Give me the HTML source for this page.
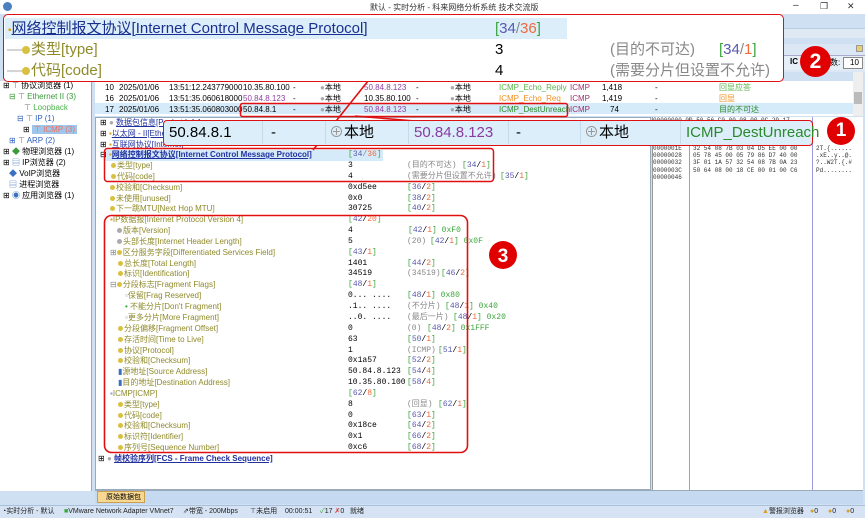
<!DOCTYPE html>
<html><head><meta charset="utf-8">
<style>
*{margin:0;padding:0;box-sizing:border-box}
body{width:865px;height:518px;position:relative;overflow:hidden;background:#cfe0f3;font-family:"Liberation Sans","Noto Sans CJK SC",sans-serif;font-size:8px;color:#000}
.a{position:absolute;white-space:nowrap}
.m{font-family:"Liberation Mono","Noto Sans CJK SC",monospace}
.ol{color:#8f8a2a}
.g{color:#3aa63a}.bl{color:#5a5ab0}.o{color:#f06a3a}.gy{color:#888}
.row{position:absolute;left:0;height:11px;line-height:11px;white-space:nowrap}
.ic{display:inline-block;width:5px;height:5px;border-radius:50%;background:#d8c040;vertical-align:middle;margin-right:1px}
.pl div{position:absolute;white-space:nowrap}
</style></head><body>
<div class="a" style="left:0;top:0;width:865px;height:14px;background:#fff"></div>
<div class="a" style="left:3px;top:2px;width:9px;height:9px;border-radius:50%;background:#4a7fc0"></div>
<div class="a" style="left:370px;top:2px;font-size:8px;color:#333">默认 - 实时分析 - 科来网络分析系统 技术交流版</div>
<div class="a" style="left:793px;top:0px;font-size:10px;color:#333">–</div>
<div class="a" style="left:820px;top:1px;font-size:9px;color:#333">❐</div>
<div class="a" style="left:847px;top:1px;font-size:9px;color:#333">✕</div>
<div class="a" style="left:784px;top:28px;width:81px;height:10px;background:#dfe9f4;border-top:1px solid #b8cde6"></div>
<div class="a" style="left:784px;top:44px;width:81px;height:28px;background:#dbe7f5"></div>
<div class="a" style="left:856px;top:45px;width:7px;height:7px;background:#e8d070;border:1px solid #999"></div>
<div class="a" style="left:784px;top:55px;width:81px;height:15px;background:#e6eef8;border-top:1px solid #aac"></div>
<div class="a" style="left:790px;top:57px;font-size:8px;font-weight:bold">IC</div>
<div class="a" style="left:830px;top:57px;font-size:8px">数:</div>
<div class="a" style="left:843px;top:57px;width:20px;height:12px;background:#fff;border:1px solid #888;font-size:8px;padding-left:6px">10</div>
<div class="a" style="left:0;top:81px;width:92px;height:410px;background:#fff;border-right:1px solid #9ab"></div>
<div class="a" style="left:0;top:81px;font-size:8px;line-height:10.9px">
<div style="padding-left:3px;height:11px">⊞ <span style="color:#777">⊤</span> 协议浏览器 (1)</div>
<div style="padding-left:9px;height:11px;color:#3a9a3a">⊟ <span style="color:#777">⊤</span> Ethernet II (3)</div>
<div style="padding-left:24px;height:11px;color:#4ab34a"><span style="color:#777">⊤</span> Loopback</div>
<div style="padding-left:17px;height:11px;color:#3060c0">⊟ <span style="color:#777">⊤</span> IP (1)</div>
<div style="padding-left:23px;height:11px">⊞ <span style="background:#9ec6ea;color:#f07060;padding:0 2px">⊤ ICMP (3)</span></div>
<div style="padding-left:9px;height:11px;color:#3060c0">⊞ <span style="color:#777">⊤</span> ARP (2)</div>
<div style="padding-left:3px;height:11px">⊞ <span style="color:#3a9a3a">◆</span> 物理浏览器 (1)</div>
<div style="padding-left:3px;height:11px">⊞ <span style="color:#3a70c0">▤</span> IP浏览器 (2)</div>
<div style="padding-left:9px;height:11px"><span style="color:#3a70c0">◆</span> VoIP浏览器</div>
<div style="padding-left:9px;height:11px"><span style="color:#3a70c0">▤</span> 进程浏览器</div>
<div style="padding-left:3px;height:11px">⊞ <span style="color:#3a70c0">◉</span> 应用浏览器 (1)</div>
</div>
<div class="a" style="left:95px;top:81px;width:758px;height:35px;background:#fff"></div>
<div class="a" style="left:95px;top:103px;width:758px;height:11px;background:#d6ebf9"></div>
<div class="a" style="left:853px;top:72px;width:10px;height:44px;background:#eee"></div>
<div class="a" style="left:854px;top:92px;width:8px;height:12px;background:#bbb"></div>
<div class="pl a" style="left:0;top:82px;font-size:8px;line-height:11px">
<div style="left:105px;top:0">10</div><div style="left:119px;top:0">2025/01/06</div><div style="left:169px;top:0">13:51:12.243779000</div><div style="left:243px;top:0">10.35.80.100</div><div style="left:293px;top:0">-</div><div style="left:320px;top:0"><span style="color:#aaa">●</span>本地</div><div style="left:364px;top:0;color:#9040a0">50.84.8.123</div><div style="left:416px;top:0">-</div><div style="left:450px;top:0"><span style="color:#aaa">●</span>本地</div><div style="left:499px;top:0;color:#5ab34a">ICMP_Echo_Reply</div><div style="left:570px;top:0;color:#a03070">ICMP</div><div style="left:602px;top:0">1,418</div><div style="left:655px;top:0">-</div><div style="left:719px;top:0;color:#5ab34a">回显应答</div>
<div style="left:105px;top:11px">16</div><div style="left:119px;top:11px">2025/01/06</div><div style="left:169px;top:11px">13:51:35.060618000</div><div style="left:243px;top:11px;color:#9040a0">50.84.8.123</div><div style="left:293px;top:11px">-</div><div style="left:320px;top:11px"><span style="color:#aaa">●</span>本地</div><div style="left:364px;top:11px">10.35.80.100</div><div style="left:416px;top:11px">-</div><div style="left:450px;top:11px"><span style="color:#aaa">●</span>本地</div><div style="left:499px;top:11px;color:#f09020">ICMP_Echo_Req</div><div style="left:570px;top:11px;color:#a03070">ICMP</div><div style="left:602px;top:11px">1,419</div><div style="left:655px;top:11px">-</div><div style="left:719px;top:11px;color:#f09020">回显</div>
<div style="left:105px;top:22px">17</div><div style="left:119px;top:22px">2025/01/06</div><div style="left:169px;top:22px">13:51:35.060803000</div><div style="left:243px;top:22px">50.84.8.1</div><div style="left:293px;top:22px">-</div><div style="left:320px;top:22px"><span style="color:#aaa">●</span>本地</div><div style="left:364px;top:22px;color:#9040a0">50.84.8.123</div><div style="left:416px;top:22px">-</div><div style="left:450px;top:22px"><span style="color:#aaa">●</span>本地</div><div style="left:499px;top:22px;color:#2a8a2a">ICMP_DestUnreach</div><div style="left:570px;top:22px;color:#a03070">ICMP</div><div style="left:610px;top:22px">74</div><div style="left:655px;top:22px">-</div><div style="left:719px;top:22px;color:#2a8a2a">目的不可达</div>
</div>
<div class="a" style="left:95px;top:117px;width:556px;height:373px;background:#fff;border:1px solid #9ab"></div>
<div class="a" style="left:105px;top:150px;width:278px;height:11px;background:#d6ebf9"></div>
<div class="a" style="left:0;top:117px;width:651px;height:360px">
<div class="row" style="top:0;left:100px">⊞ <span style="color:#aaa">●</span> <span style="color:#2030a0;text-decoration:underline">数据包信息[Packet Info]</span></div>
<div class="row" style="top:11px;left:100px">⊞ <span style="color:#d8a020">▪</span><span style="color:#2030a0;text-decoration:underline">以太网 - II[Ethernet]</span></div>
<div class="row" style="top:22px;left:100px">⊞ <span style="color:#d8a020">▪</span><span style="color:#2030a0;text-decoration:underline">互联网协议[Internet]</span></div>
</div>
<div class="a" style="left:0;top:149px;width:651px;height:330px">
<div class="row" style="top:0;left:100px">⊟ <span style="color:#d8a020">▪</span><span style="color:#2030a0;text-decoration:underline;font-weight:bold">网络控制报文协议[Internet Control Message Protocol]</span></div>
<div class="row m" style="top:0;left:348px"><span class="g">[</span><span class="bl">34</span><span class="gy">/</span><span class="o">36</span><span class="g">]</span></div>
</div>
<div class="a" style="left:0;top:160px;width:651px;height:320px;font-size:8px">
<div class="row ol" style="top:0;left:111px"><span class="ic"></span>类型[type]</div><div class="row m" style="top:0;left:348px">3</div><div class="row m gy" style="top:0;left:407px">(目的不可达)</div><div class="row m" style="top:0;left:462px"><span class="g">[</span><span class="bl">34</span>/<span class="o">1</span><span class="g">]</span></div>
<div class="row ol" style="top:11px;left:111px"><span class="ic"></span>代码[code]</div><div class="row m" style="top:11px;left:348px">4</div><div class="row m gy" style="top:11px;left:407px">(需要分片但设置不允许)</div><div class="row m" style="top:11px;left:500px"><span class="g">[</span><span class="bl">35</span>/<span class="o">1</span><span class="g">]</span></div>
<div class="row ol" style="top:22px;left:110px"><span class="ic"></span>校验和[Checksum]</div><div class="row m" style="top:22px;left:348px">0xd5ee</div><div class="row m" style="top:22px;left:407px"><span class="g">[</span><span class="bl">36</span>/<span class="o">2</span><span class="g">]</span></div>
<div class="row ol" style="top:33px;left:110px"><span class="ic"></span>未使用[unused]</div><div class="row m" style="top:33px;left:348px">0x0</div><div class="row m" style="top:33px;left:407px"><span class="g">[</span><span class="bl">38</span>/<span class="o">2</span><span class="g">]</span></div>
<div class="row ol" style="top:43px;left:110px"><span class="ic"></span>下一跳MTU[Next Hop MTU]</div><div class="row m" style="top:43px;left:348px">30725</div><div class="row m" style="top:43px;left:407px"><span class="g">[</span><span class="bl">40</span>/<span class="o">2</span><span class="g">]</span></div>
<div class="row ol" style="top:54px;left:110px"><span style="color:#d8a020">▪</span>IP数据报[Internet Protocol Version 4]</div><div class="row m" style="top:54px;left:348px"><span class="g">[</span><span class="bl">42</span>/<span class="o">20</span><span class="g">]</span></div>
<div class="row ol" style="top:65px;left:117px"><span class="ic" style="background:#aaa"></span>版本[Version]</div><div class="row m" style="top:65px;left:348px">4</div><div class="row m" style="top:65px;left:408px"><span class="g">[</span><span class="bl">42</span>/<span class="o">1</span><span class="g">]</span> <span class="g">0xF0</span></div>
<div class="row ol" style="top:76px;left:117px"><span class="ic" style="background:#aaa"></span>头部长度[Internet Header Length]</div><div class="row m" style="top:76px;left:348px">5</div><div class="row m gy" style="top:76px;left:407px">(20)</div><div class="row m" style="top:76px;left:430px"><span class="g">[</span><span class="bl">42</span>/<span class="o">1</span><span class="g">]</span> <span class="g">0x0F</span></div>
<div class="row ol" style="top:87px;left:110px"><span style="color:#888">⊞</span><span class="ic"></span>区分服务字段[Differentiated Services Field]</div><div class="row m" style="top:87px;left:348px"><span class="g">[</span><span class="bl">43</span>/<span class="o">1</span><span class="g">]</span></div>
<div class="row ol" style="top:98px;left:118px"><span class="ic"></span>总长度[Total Length]</div><div class="row m" style="top:98px;left:348px">1401</div><div class="row m" style="top:98px;left:407px"><span class="g">[</span><span class="bl">44</span>/<span class="o">2</span><span class="g">]</span></div>
<div class="row ol" style="top:108px;left:118px"><span class="ic"></span>标识[Identification]</div><div class="row m" style="top:108px;left:348px">34519</div><div class="row m gy" style="top:108px;left:407px">(34519)</div><div class="row m" style="top:108px;left:441px"><span class="g">[</span><span class="bl">46</span>/<span class="o">2</span><span class="g">]</span></div>
<div class="row ol" style="top:119px;left:110px"><span style="color:#888">⊟</span><span class="ic"></span>分段标志[Fragment Flags]</div><div class="row m" style="top:119px;left:348px"><span class="g">[</span><span class="bl">48</span>/<span class="o">1</span><span class="g">]</span></div>
<div class="row ol" style="top:130px;left:125px"><span style="color:#999">▫</span>保留[Frag Reserved]</div><div class="row m" style="top:130px;left:348px">0... ....</div><div class="row m" style="top:130px;left:407px"><span class="g">[</span><span class="bl">48</span>/<span class="o">1</span><span class="g">]</span> <span class="g">0x80</span></div>
<div class="row ol" style="top:141px;left:125px"><span style="color:#3a3">•</span> 不能分片[Don't Fragment]</div><div class="row m" style="top:141px;left:348px">.1.. ....</div><div class="row m gy" style="top:141px;left:407px">(不分片)</div><div class="row m" style="top:141px;left:445px"><span class="g">[</span><span class="bl">48</span>/<span class="o">1</span><span class="g">]</span> <span class="g">0x40</span></div>
<div class="row ol" style="top:152px;left:125px"><span style="color:#999">▫</span>更多分片[More Fragment]</div><div class="row m" style="top:152px;left:348px">..0. ....</div><div class="row m gy" style="top:152px;left:407px">(最后一片)</div><div class="row m" style="top:152px;left:453px"><span class="g">[</span><span class="bl">48</span>/<span class="o">1</span><span class="g">]</span> <span class="g">0x20</span></div>
<div class="row ol" style="top:163px;left:118px"><span class="ic"></span>分段偏移[Fragment Offset]</div><div class="row m" style="top:163px;left:348px">0</div><div class="row m gy" style="top:163px;left:407px">(0)</div><div class="row m" style="top:163px;left:427px"><span class="g">[</span><span class="bl">48</span>/<span class="o">2</span><span class="g">]</span> <span class="g">0x1FFF</span></div>
<div class="row ol" style="top:174px;left:118px"><span class="ic"></span>存活时间[Time to Live]</div><div class="row m" style="top:174px;left:348px">63</div><div class="row m" style="top:174px;left:407px"><span class="g">[</span><span class="bl">50</span>/<span class="o">1</span><span class="g">]</span></div>
<div class="row ol" style="top:185px;left:118px"><span class="ic"></span>协议[Protocol]</div><div class="row m" style="top:185px;left:348px">1</div><div class="row m gy" style="top:185px;left:407px">(ICMP)</div><div class="row m" style="top:185px;left:438px"><span class="g">[</span><span class="bl">51</span>/<span class="o">1</span><span class="g">]</span></div>
<div class="row ol" style="top:195px;left:118px"><span class="ic"></span>校验和[Checksum]</div><div class="row m" style="top:195px;left:348px">0x1a57</div><div class="row m" style="top:195px;left:407px"><span class="g">[</span><span class="bl">52</span>/<span class="o">2</span><span class="g">]</span></div>
<div class="row ol" style="top:206px;left:118px"><span style="color:#3a70c0">▮</span>源地址[Source Address]</div><div class="row m" style="top:206px;left:348px">50.84.8.123</div><div class="row m" style="top:206px;left:407px"><span class="g">[</span><span class="bl">54</span>/<span class="o">4</span><span class="g">]</span></div>
<div class="row ol" style="top:217px;left:118px"><span style="color:#3a70c0">▮</span>目的地址[Destination Address]</div><div class="row m" style="top:217px;left:348px">10.35.80.100</div><div class="row m" style="top:217px;left:407px"><span class="g">[</span><span class="bl">58</span>/<span class="o">4</span><span class="g">]</span></div>
<div class="row ol" style="top:228px;left:110px"><span style="color:#88a0d0">▪</span>ICMP[ICMP]</div><div class="row m" style="top:228px;left:348px"><span class="g">[</span><span class="bl">62</span>/<span class="o">8</span><span class="g">]</span></div>
<div class="row ol" style="top:239px;left:118px"><span class="ic"></span>类型[type]</div><div class="row m" style="top:239px;left:348px">8</div><div class="row m gy" style="top:239px;left:407px">(回显)</div><div class="row m" style="top:239px;left:438px"><span class="g">[</span><span class="bl">62</span>/<span class="o">1</span><span class="g">]</span></div>
<div class="row ol" style="top:250px;left:118px"><span class="ic"></span>代码[code]</div><div class="row m" style="top:250px;left:348px">0</div><div class="row m" style="top:250px;left:407px"><span class="g">[</span><span class="bl">63</span>/<span class="o">1</span><span class="g">]</span></div>
<div class="row ol" style="top:260px;left:118px"><span class="ic"></span>校验和[Checksum]</div><div class="row m" style="top:260px;left:348px">0x18ce</div><div class="row m" style="top:260px;left:407px"><span class="g">[</span><span class="bl">64</span>/<span class="o">2</span><span class="g">]</span></div>
<div class="row ol" style="top:271px;left:118px"><span class="ic"></span>标识符[Identifier]</div><div class="row m" style="top:271px;left:348px">0x1</div><div class="row m" style="top:271px;left:407px"><span class="g">[</span><span class="bl">66</span>/<span class="o">2</span><span class="g">]</span></div>
<div class="row ol" style="top:282px;left:118px"><span class="ic"></span>序列号[Sequence Number]</div><div class="row m" style="top:282px;left:348px">0xc6</div><div class="row m" style="top:282px;left:407px"><span class="g">[</span><span class="bl">68</span>/<span class="o">2</span><span class="g">]</span></div>
<div class="row" style="top:293px;left:98px">⊞ <span style="color:#aaa">●</span> <span style="color:#2030a0;text-decoration:underline;font-weight:bold">帧校验序列[FCS - Frame Check Sequence]</span></div>
</div>
<div class="a" style="left:652px;top:117px;width:211px;height:373px;background:#fff;border-left:1px solid #999"></div>
<div class="a" style="left:689px;top:117px;width:1px;height:373px;background:#9a9ae0"></div>
<div class="a" style="left:812px;top:117px;width:1px;height:373px;background:#9a9ae0"></div>
<div class="a m" style="left:653px;top:145px;font-size:6px;line-height:7.2px;color:#333">0000001E<br>00000028<br>00000032<br>0000003C<br>00000046</div>
<div class="a m" style="left:693px;top:145px;font-size:6px;line-height:7.2px;color:#333">32 54 08 7B 03 04 D5 EE 00 00<br>05 78 45 00 05 79 86 D7 40 00<br>3F 01 1A 57 32 54 08 7B 0A 23<br>50 64 08 00 18 CE 00 01 00 C6</div>
<div class="a m" style="left:816px;top:145px;font-size:6px;line-height:7.2px;color:#333">2T.{......<br>.xE..y..@.<br>?..W2T.{.#<br>Pd........</div>
<div class="a m" style="left:653px;top:117px;font-size:6px;color:#333">00000000 00 50 56 C0 00 08 00 0C 29 17</div>
<div class="a" style="left:95px;top:490px;width:768px;height:14px;background:#c5d9f1;border-top:1px solid #9ab"></div>
<div class="a" style="left:97px;top:491px;width:48px;height:12px;background:#f8d890;border:1px solid #c9a050;font-size:7px;line-height:11px;padding-left:8px">原始数据包</div>
<div class="a" style="left:0;top:505px;width:865px;height:13px;background:#d5e3f4;border-top:1px solid #a9c0dd;font-size:7px;line-height:12px;color:#222">
<span style="position:absolute;left:2px">◔实时分析 - 默认</span>
<span style="position:absolute;left:64px"><span style="color:#3a3">■</span>VMware Network Adapter VMnet7</span>
<span style="position:absolute;left:183px">⇗带宽 - 200Mbps</span>
<span style="position:absolute;left:250px">⊤未启用</span>
<span style="position:absolute;left:285px">00:00:51</span>
<span style="position:absolute;left:320px"><span style="color:#3a3">✓</span>17 <span style="color:#c33">✗</span>0</span>
<span style="position:absolute;left:350px">就绪</span>
<span style="position:absolute;left:762px"><span style="color:#d8a020">▲</span>警报浏览器</span>
<span style="position:absolute;left:810px"><span style="color:#d8a020">●</span>0</span>
<span style="position:absolute;left:828px"><span style="color:#d8a020">●</span>0</span>
<span style="position:absolute;left:846px"><span style="color:#d8a020">●</span>0</span>
</div>
<svg class="a" style="left:0;top:0" width="865" height="518">
<line x1="368" y1="81" x2="313" y2="150" stroke="#e01010" stroke-width="1.6"/>
<line x1="355" y1="116" x2="415" y2="121" stroke="#e01010" stroke-width="1.6"/>
<rect x="240.5" y="103.5" width="327" height="13" rx="2" fill="none" stroke="#e01010" stroke-width="1.5"/>
<rect x="104.5" y="148.5" width="389" height="33" rx="3" fill="none" stroke="#e01010" stroke-width="1.5"/>
<rect x="104.5" y="215.5" width="363" height="237" rx="7" fill="none" stroke="#e01010" stroke-width="1.6"/>
<circle cx="503" cy="255" r="14" fill="#e00000"/>
<text x="503" y="262" font-size="19" fill="#fff" text-anchor="middle" font-family="Liberation Sans" font-weight="bold">3</text>
</svg>
<div class="a" style="left:163px;top:120px;width:650px;height:26px;background:#dbeefa;border:1.5px solid #e01010;border-radius:4px;font-size:15px;line-height:23px">
<span class="a" style="left:5px">50.84.8.1</span>
<span class="a" style="left:98px;top:0;width:1px;height:23px;background:#c6dbe9"></span>
<span class="a" style="left:107px">-</span>
<span class="a" style="left:161px;top:0;width:1px;height:23px;background:#c6dbe9"></span>
<span class="a" style="left:165px"><span style="color:#999">⊕</span>本地</span>
<span class="a" style="left:244px;top:0;width:1px;height:23px;background:#c6dbe9"></span>
<span class="a" style="left:250px;color:#8a3aa0">50.84.8.123</span>
<span class="a" style="left:344px;top:0;width:1px;height:23px;background:#c6dbe9"></span>
<span class="a" style="left:352px">-</span>
<span class="a" style="left:416px;top:0;width:1px;height:23px;background:#c6dbe9"></span>
<span class="a" style="left:420px"><span style="color:#999">⊕</span>本地</span>
<span class="a" style="left:516px;top:0;width:1px;height:23px;background:#c6dbe9"></span>
<span class="a" style="left:522px;color:#2a8a2a">ICMP_DestUnreach</span>
</div>
<div class="a" style="left:827px;top:117px;width:28px;height:28px;border-radius:50%;background:#e00000;color:#fff;font-size:19px;font-weight:bold;text-align:center;line-height:28px">1</div>
<div class="a" style="left:3px;top:14px;width:781px;height:68px;background:#fff;border:1.5px solid #e01010;border-radius:5px;font-size:15px">
<div class="a" style="left:1px;top:3px;width:562px;height:21px;background:#dbeefa"></div>
<div class="a" style="left:4px;top:4px;line-height:20px"><span style="color:#d8a020;font-size:10px">▪</span><span style="color:#1a2f90;text-decoration:underline">网络控制报文协议[Internet Control Message Protocol]</span></div>
<div class="a" style="left:491px;top:4px;line-height:20px"><span class="g">[</span><span class="bl">34</span><span class="gy">/</span><span class="o">36</span><span class="g">]</span></div>
<div class="a ol" style="left:3px;top:25px;line-height:20px"><span style="color:#aaa">—</span><span class="ic" style="width:8px;height:8px"></span>类型[type]</div>
<div class="a" style="left:491px;top:25px;line-height:20px">3</div>
<div class="a gy" style="left:606px;top:25px;line-height:20px">(目的不可达)</div>
<div class="a" style="left:715px;top:25px;line-height:20px"><span class="g">[</span><span class="bl">34</span><span class="gy">/</span><span class="o">1</span><span class="g">]</span></div>
<div class="a ol" style="left:3px;top:46px;line-height:20px"><span style="color:#aaa">—</span><span class="ic" style="width:8px;height:8px"></span>代码[code]</div>
<div class="a" style="left:491px;top:46px;line-height:20px">4</div>
<div class="a gy" style="left:606px;top:46px;line-height:20px">(需要分片但设置不允许)</div>
</div>
<div class="a" style="left:800px;top:46px;width:31px;height:31px;border-radius:50%;background:#e00000;color:#fff;font-size:21px;font-weight:bold;text-align:center;line-height:31px">2</div>
</body></html>
